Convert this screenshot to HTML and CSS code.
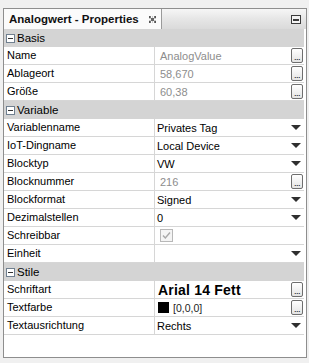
FILE: index.html
```html
<!DOCTYPE html>
<html lang="de">
<head>
  <meta charset="UTF-8" />
  <title>Analogwert - Properties</title>
  <link rel="stylesheet" href="styles.css">
</head>
<body>

  <div class="panel">
    <div class="tabbar">
      <div class="tab">
        <span class="tab-title">Analogwert - Properties</span>
        <svg class="tab-close" width="7" height="7" viewBox="0 0 7 7">
          <rect x="0" y="0" width="2" height="2" fill="#555"/>
          <rect x="5" y="0" width="2" height="2" fill="#555"/>
          <rect x="2" y="2" width="3" height="3" fill="#666"/>
          <rect x="0" y="5" width="2" height="2" fill="#555"/>
          <rect x="5" y="5" width="2" height="2" fill="#555"/>
          <rect x="1" y="1" width="5" height="5" fill="none" stroke="#999" stroke-width="1" stroke-dasharray="1 1"/>
        </svg>
      </div>
      <div class="strip">
        <svg class="strip-min" width="10" height="9" viewBox="0 0 10 9">
          <rect x="0.5" y="0.5" width="9" height="8" fill="#f4f4f4" stroke="#3c3c3c"/>
          <rect x="2" y="4" width="6" height="2" fill="#3c3c3c"/>
        </svg>
      </div>
    </div>

    <div class="props">
      <div class="section"><span class="toggle"></span>Basis</div>
      <div class="row">
        <div class="label">Name</div>
        <div class="value disabled">AnalogValue<span class="dots">...</span></div>
      </div>
      <div class="row">
        <div class="label">Ablageort</div>
        <div class="value disabled">58,670<span class="dots">...</span></div>
      </div>
      <div class="row">
        <div class="label">Größe</div>
        <div class="value disabled">60,38<span class="dots">...</span></div>
      </div>

      <div class="section"><span class="toggle"></span>Variable</div>
      <div class="row">
        <div class="label">Variablenname</div>
        <div class="value">Privates Tag<span class="arrow"></span></div>
      </div>
      <div class="row">
        <div class="label">IoT-Dingname</div>
        <div class="value">Local Device<span class="arrow"></span></div>
      </div>
      <div class="row">
        <div class="label">Blocktyp</div>
        <div class="value">VW<span class="arrow"></span></div>
      </div>
      <div class="row">
        <div class="label">Blocknummer</div>
        <div class="value disabled">216<span class="dots">...</span></div>
      </div>
      <div class="row">
        <div class="label">Blockformat</div>
        <div class="value">Signed<span class="arrow"></span></div>
      </div>
      <div class="row">
        <div class="label">Dezimalstellen</div>
        <div class="value">0<span class="arrow"></span></div>
      </div>
      <div class="row">
        <div class="label">Schreibbar</div>
        <div class="value">
          <svg class="check" width="13" height="13" viewBox="0 0 13 13">
            <rect x="0.5" y="0.5" width="12" height="12" fill="#f4f4f4" stroke="#b8b8b8"/>
            <path d="M3 6.5 L5.3 9 L10 3.5" fill="none" stroke="#a8a8a8" stroke-width="1.4"/>
          </svg>
        </div>
      </div>
      <div class="row">
        <div class="label">Einheit</div>
        <div class="value"><span class="arrow"></span></div>
      </div>

      <div class="section"><span class="toggle"></span>Stile</div>
      <div class="row">
        <div class="label">Schriftart</div>
        <div class="value"><span class="font-name">Arial 14 Fett</span><span class="dots">...</span></div>
      </div>
      <div class="row">
        <div class="label">Textfarbe</div>
        <div class="value"><span class="swatch"></span><span class="rgb">[0,0,0]</span><span class="dots">...</span></div>
      </div>
      <div class="row">
        <div class="label">Textausrichtung</div>
        <div class="value">Rechts<span class="arrow"></span></div>
      </div>
    </div>
  </div>

</body>
</html>
```

FILE: styles.css
```css
* {
  margin: 0;
  padding: 0;
  box-sizing: border-box;
}

body {
  background-color: #f0f0f0;
  font-family: 'Liberation Sans', Arial, sans-serif;
  font-size: 11px;
  color: #000;
}

.panel {
  margin: 8px 0 0 3px;
  width: 304px;
  height: 350px;
  border: 1px solid #8e8e8e;
  background-color: #ffffff;
}

.tabbar {
  display: flex;
  height: 20px;
}
.tab {
  width: 158px;
  display: flex;
  align-items: center;
  padding-left: 5px;
  background-color: #fbfbfb;
  border-right: 1px solid #9a9a9a;
}
.tab-title {
  font-size: 11.5px;
  font-weight: bold;
  color: #111;
}
.tab-close {
  margin-left: 10px;
}
.strip {
  flex: 1;
  display: flex;
  align-items: center;
  justify-content: flex-end;
  padding-right: 5px;
  background: linear-gradient(to bottom, #f6f6f6, #e6e6e6 50%, #dadada);
}

.props {
  margin-right: 2px;
}

.section {
  height: 18px;
  display: flex;
  align-items: center;
  background-color: #d4d4d4;
  padding-left: 2px;
  font-size: 11.5px;
}
.toggle {
  position: relative;
  width: 9px;
  height: 9px;
  border: 1px solid #6f7f8f;
  background-color: #fff;
  margin-right: 2px;
}
.toggle::after {
  content: '';
  position: absolute;
  left: 1px;
  top: 3px;
  width: 5px;
  height: 1px;
  background-color: #333;
}

.row {
  display: flex;
  height: 18px;
  border-bottom: 1px solid #d6d6d6;
}
.label {
  width: 151px;
  padding-left: 3px;
  border-right: 1px solid #d6d6d6;
  line-height: 17px;
  white-space: nowrap;
}
.value {
  flex: 1;
  display: flex;
  align-items: center;
  padding-left: 2px;
  white-space: nowrap;
}
.value.disabled {
  color: #8d8d8d;
  padding-left: 5px;
}

.dots {
  margin-left: auto;
  margin-right: 1px;
  width: 12px;
  height: 15px;
  border: 1px solid #6e6e6e;
  border-radius: 2px;
  background: linear-gradient(to bottom, #ffffff, #e4e4e4);
  color: #000;
  font-size: 9px;
  line-height: 17px;
  text-align: center;
  letter-spacing: -0.5px;
}

.arrow {
  margin-left: auto;
  margin-right: 3px;
  width: 0;
  height: 0;
  border-left: 5px solid transparent;
  border-right: 5px solid transparent;
  border-top: 5px solid #2f2f2f;
}

.check {
  margin-left: 3px;
}

.font-name {
  font-size: 14px;
  font-weight: bold;
  letter-spacing: 0.2px;
  padding-left: 1px;
}

.swatch {
  width: 11px;
  height: 11px;
  margin-left: 1px;
  background-color: #000;
}
.rgb {
  margin-left: 4px;
  font-size: 10.5px;
  color: #222;
}
```
